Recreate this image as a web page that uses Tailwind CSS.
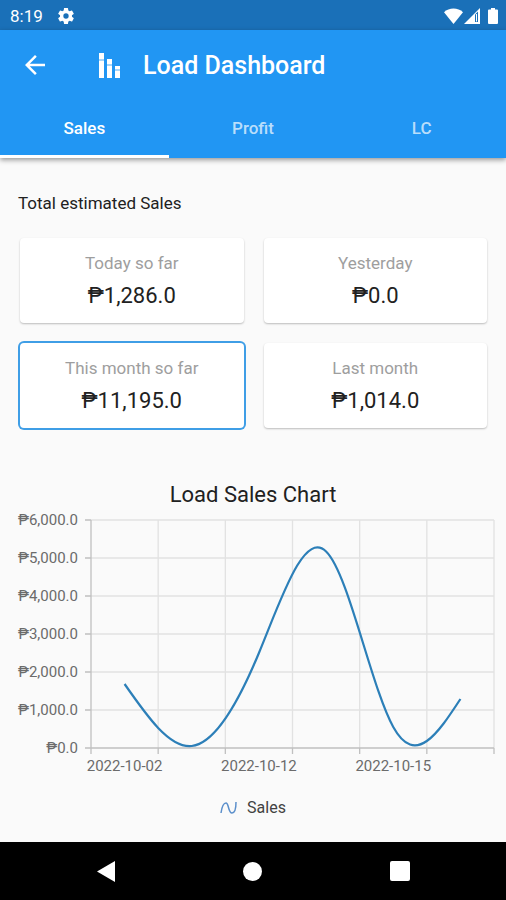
<!DOCTYPE html>
<html lang="en">
  <head>
    <meta charset="UTF-8" />
    <meta name="viewport" content="width=device-width, initial-scale=1.0" />
    <title>Load Dashboard</title>
    <script src="https://cdn.jsdelivr.net/npm/@tailwindcss/browser@4"></script>
  </head>

  <body class="flex min-h-screen flex-col bg-[#fafafa] font-[Roboto,sans-serif] text-[#212121]">
    <!-- Status bar -->
    <div class="flex h-[30px] items-center bg-[#1a70b8] pt-px pr-2 pl-[10px] text-white">
      <span class="text-[17px] leading-5">8:19</span>
      <svg class="ml-[13px] size-5" viewBox="0 0 24 24" fill="currentColor" aria-hidden="true">
        <path d="M19.14 12.94c.04-.3.06-.61.06-.94s-.02-.64-.07-.94l2.03-1.58a.49.49 0 0 0 .12-.61l-1.92-3.32a.49.49 0 0 0-.59-.22l-2.39.96c-.5-.38-1.03-.7-1.62-.94l-.36-2.54a.48.48 0 0 0-.48-.41h-3.84c-.24 0-.43.17-.47.41l-.36 2.54c-.59.24-1.13.57-1.62.94l-2.39-.96a.48.48 0 0 0-.59.22L2.74 8.87c-.12.21-.08.47.12.61l2.03 1.58c-.05.3-.09.63-.09.94s.02.64.07.94l-2.03 1.58a.49.49 0 0 0-.12.61l1.92 3.32c.12.22.37.29.59.22l2.39-.96c.5.38 1.03.7 1.62.94l.36 2.54c.05.24.24.41.48.41h3.84c.24 0 .44-.17.47-.41l.36-2.54c.59-.24 1.13-.56 1.62-.94l2.39.96c.22.08.47 0 .59-.22l1.92-3.32a.49.49 0 0 0-.12-.61zM12 15.2a3.2 3.2 0 1 1 0-6.4 3.2 3.2 0 0 1 0 6.4" />
      </svg>
      <div class="ml-auto flex items-center">
        <svg class="h-4 w-[19px]" viewBox="0 0 19 16" fill="currentColor" aria-hidden="true">
          <path d="M9.500 16 0 4.200C5-.8 14-.8 19 4.200z" />
        </svg>
        <svg class="ml-px h-4 w-4" viewBox="0 0 16 16" aria-hidden="true">
          <path d="M0 16 16 0v16z" fill="#fff" />
          <path d="M11 6.500 14 3.500V14h-3z" fill="#1a70b8" />
          <path d="M12.500 6v7.500" stroke="#fff" />
        </svg>
        <svg class="ml-2 h-4 w-[10px]" viewBox="0 0 10 16" fill="currentColor" aria-hidden="true">
          <path d="M3 0h4v1.500h2a1 1 0 0 1 1 1V15a1 1 0 0 1-1 1H1a1 1 0 0 1-1-1V2.500a1 1 0 0 1 1-1h2z" />
        </svg>
      </div>
    </div>

    <!-- App bar -->
    <header class="z-10 bg-[#2196f3] text-white shadow-[0_2px_5px_rgba(0,0,0,0.4)]">
      <div class="flex h-[70px] items-center px-5">
        <button type="button" aria-label="Back" class="flex size-[30px] items-center justify-center">
          <svg class="size-[30px]" viewBox="0 0 24 24" fill="currentColor" aria-hidden="true">
            <path d="M20 11H7.830l5.590-5.590L12 4l-8 8 8 8 1.410-1.410L7.830 13H20z" />
          </svg>
        </button>
        <svg class="ml-12 h-[26px] w-[23px]" viewBox="0 0 23 26" fill="currentColor" aria-hidden="true">
          <path d="M1 1h5v6H1zM1 9h5v17H1zM9 7h5v5H9zM9 14h5v12H9zM17 14h5v3h-5zM17 19h5v7h-5z" />
          <path d="M1 7h5v2H1zM9 12h5v2H9zM17 17h5v2h-5z" opacity=".6" />
        </svg>
        <h1 class="ml-[22px] pt-0.5 text-[25px] leading-8 font-medium">Load Dashboard</h1>
      </div>
      <div role="tablist" class="grid h-[58px] grid-cols-3 text-[17px] font-medium">
        <button type="button" role="tab" aria-selected="true" class="border-b-3 border-white pt-[2px]">Sales</button>
        <button type="button" role="tab" aria-selected="false" class="border-b-3 border-transparent pt-[2px] text-white/70">Profit</button>
        <button type="button" role="tab" aria-selected="false" class="border-b-3 border-transparent pt-[2px] text-white/70">LC</button>
      </div>
    </header>

    <main class="flex-1">
      <h2 class="px-[18px] pt-[33px] text-[17px] leading-6">Total estimated Sales</h2>

      <div class="grid grid-cols-2 gap-5 pt-[23px] pr-[19px] pl-5">
        <button type="button" class="flex h-[85px] flex-col items-center rounded bg-white pt-3 shadow-[0_1px_2px_rgba(0,0,0,0.25)]">
          <span class="text-[17px] leading-[26px] text-[#9e9e9e]">Today so far</span>
          <span class="text-[22px] leading-10">₱1,286.0</span>
        </button>
        <button type="button" class="flex h-[85px] flex-col items-center rounded bg-white pt-3 shadow-[0_1px_2px_rgba(0,0,0,0.25)]">
          <span class="text-[17px] leading-[26px] text-[#9e9e9e]">Yesterday</span>
          <span class="text-[22px] leading-10">₱0.0</span>
        </button>
        <button type="button" class="flex h-[85px] flex-col items-center rounded bg-white pt-3 ring-2 ring-[#3f9ee6]">
          <span class="text-[17px] leading-[26px] text-[#9e9e9e]">This month so far</span>
          <span class="text-[22px] leading-10">₱11,195.0</span>
        </button>
        <button type="button" class="flex h-[85px] flex-col items-center rounded bg-white pt-3 shadow-[0_1px_2px_rgba(0,0,0,0.25)]">
          <span class="text-[17px] leading-[26px] text-[#9e9e9e]">Last month</span>
          <span class="text-[22px] leading-10">₱1,014.0</span>
        </button>
      </div>

      <!-- Chart -->
      <section class="pt-[53px] pr-3">
        <h2 class="pl-3 text-center text-[22px] leading-7">Load Sales Chart</h2>
        <div class="grid grid-cols-[78px_1fr] gap-x-[13px] pt-[11px] text-[#6b6b6b]">
          <div class="-my-[10px] flex flex-col justify-between text-right text-[15px] leading-5">
            <span>₱6,000.0</span>
            <span>₱5,000.0</span>
            <span>₱4,000.0</span>
            <span>₱3,000.0</span>
            <span>₱2,000.0</span>
            <span>₱1,000.0</span>
            <span>₱0.0</span>
          </div>
          <svg class="h-[228px] w-full overflow-visible" viewBox="0 0 402 228" preserveAspectRatio="none" fill="none" role="img" aria-label="Sales by date">
            <path stroke="#e2e2e2" stroke-width="1.300" vector-effect="non-scaling-stroke" d="M0 0H402M0 38H402M0 76H402M0 114H402M0 152H402M0 190H402M67 0V228M134 0V228M201 0V228M268 0V228M335 0V228M402 0V228" />
            <path stroke="#c0c0c0" stroke-width="1.300" vector-effect="non-scaling-stroke" d="M0 0V234M-6 228H402M-6 0H0M-6 38H0M-6 76H0M-6 114H0M-6 152H0M-6 190H0M67 228v6M134 228v6M201 228v6M268 228v6M335 228v6M402 228v6" />
            <path stroke="#2c7fb8" stroke-width="2.200" vector-effect="non-scaling-stroke" d="M33.500 164C55.800 196.100 78.200 228.300 100.500 226C122.800 223.700 145.200 187 167.500 133C189.800 79 212.200 10 234.500 31.500C256.800 53 279.200 166.500 301.500 207C323.800 247.500 346.200 213.200 368.500 179" />
          </svg>
          <div class="col-start-2 grid grid-cols-6 justify-items-center pt-2 text-[15px] leading-5 whitespace-nowrap">
            <span class="flex w-0 justify-center">2022-10-02</span>
            <span class="col-start-3 flex w-0 justify-center">2022-10-12</span>
            <span class="col-start-5 flex w-0 justify-center">2022-10-15</span>
          </div>
        </div>
        <div class="flex items-center justify-center gap-[10px] pt-[22px] pl-3 text-[16px] leading-5 text-[#424242]">
          <svg class="h-[14px] w-[17px]" viewBox="0 0 17 14" fill="none" aria-hidden="true">
            <path d="M1 12C2 5 4 2 6 2c3 0 2 10 6 10 3 0 4-5 4-11" stroke="#5b8fcb" stroke-width="1.500" />
          </svg>
          <span>Sales</span>
        </div>
      </section>
    </main>

    <!-- System navigation -->
    <nav class="flex h-[58px] items-center justify-around bg-black px-8 text-white">
      <button type="button" aria-label="Back" class="flex size-10 items-center justify-center">
        <svg class="h-[21px] w-[18px]" viewBox="0 0 18 21" fill="currentColor"><path d="M18 0v21L0 10.500z" /></svg>
      </button>
      <button type="button" aria-label="Home" class="flex size-10 items-center justify-center">
        <span class="size-[19px] rounded-full bg-white"></span>
      </button>
      <button type="button" aria-label="Recent apps" class="flex size-10 items-center justify-center">
        <span class="size-5 rounded-xs bg-white"></span>
      </button>
    </nav>
  </body>
</html>
